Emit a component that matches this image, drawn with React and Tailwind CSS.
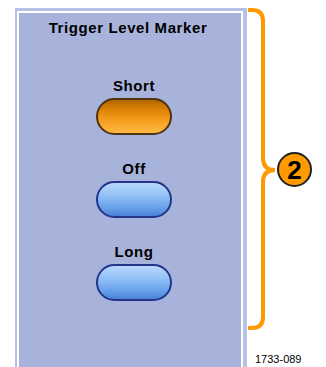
import React from 'react'

const font = { fontFamily: '"Liberation Sans", Arial, sans-serif' }

function PillButton({ label, tone }) {
  const face =
    tone === 'orange'
      ? 'border-[#4e3410] bg-[linear-gradient(to_bottom,#b36600_0%,#e38806_35%,#f9a326_70%,#ffba44_100%)]'
      : 'border-[#25348a] bg-[linear-gradient(to_bottom,#b7d9fd_0%,#95c3f7_35%,#6ea6ec_70%,#4a83d6_100%)]'
  return (
    <div className="flex flex-col items-center">
      <div className="h-[18px] text-[15px] leading-[18px] font-bold tracking-[0.6px] text-black">
        {label}
      </div>
      <div className={`mt-[3px] w-[76px] h-[37px] rounded-full border-2 ${face}`} />
    </div>
  )
}

export default function App() {
  return (
    <div className="w-[326px] h-[367px] bg-white overflow-hidden flex" style={font}>
      {/* Menu panel */}
      <div className="ml-[15px] mt-[8px] w-[232px] h-[359px] shrink-0 bg-[#b6c1e7] pt-[3px] pl-[2px] pr-[4px]">
        <div className="h-full border-2 border-b-0 border-white bg-[#a8b3dc] flex flex-col items-center">
          <div className="pt-[6px] pr-[4px] text-[15px] leading-[18px] font-bold tracking-[0.6px] text-black">
            Trigger Level Marker
          </div>
          <div className="mt-[40px] pl-[8px] flex flex-col gap-[25px]">
            <PillButton label="Short" tone="orange" />
            <PillButton label="Off" tone="blue" />
            <PillButton label="Long" tone="blue" />
          </div>
        </div>
      </div>

      {/* Callout */}
      <div className="flex flex-col">
        <div className="flex items-start h-[330px]">
          <svg width="30" height="330" viewBox="0 0 30 330" className="shrink-0">
            <path
              d="M1 10 H5 Q16 10 16 21 V158 Q16 170 28 170 Q16 170 16 182 V317 Q16 328 5 328 H1"
              fill="none"
              stroke="#ff9900"
              strokeWidth="4"
            />
          </svg>
          <div className="mt-[152px] w-[35px] h-[35px] rounded-full bg-[#ff9a00] border-2 border-[#222] flex items-center justify-center text-[26px] leading-none font-bold text-black">
            2
          </div>
        </div>
        <div className="mt-[23px] ml-[8px] text-[11px] leading-[13px] text-black">1733-089</div>
      </div>
    </div>
  )
}
